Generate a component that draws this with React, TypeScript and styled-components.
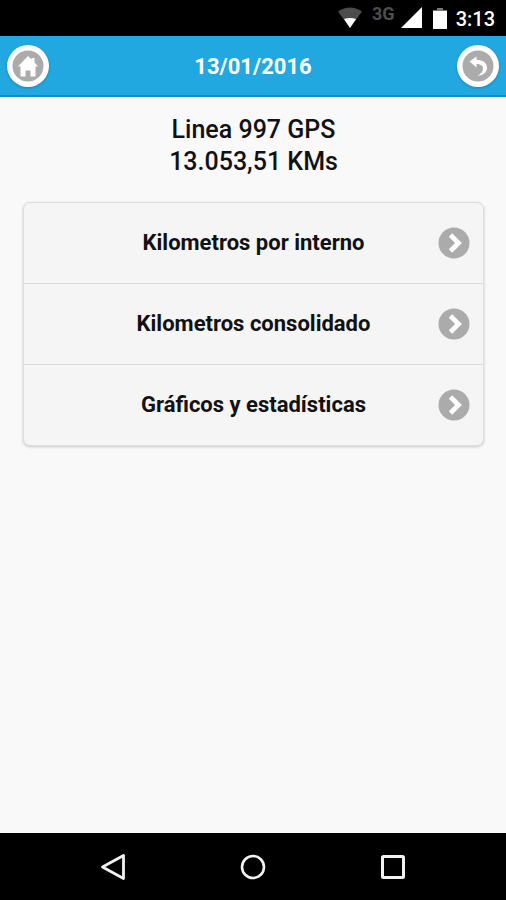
import React from "react";
import styled, { createGlobalStyle } from "styled-components";

const GlobalStyle = createGlobalStyle`
  *, *::before, *::after { box-sizing: border-box; }
  body {
    margin: 0;
    background: #f9f9f9;
    color: #111;
    font-family: Roboto, "Liberation Sans", sans-serif;
  }
`;

const Screen = styled.div`
  display: flex;
  flex-direction: column;
  min-height: 100vh;
`;

const StatusBar = styled.div`
  display: flex;
  align-items: center;
  justify-content: flex-end;
  height: 36px;
  padding: 0 11px;
  background: #000;
  color: #fff;
`;

const Network = styled.span`
  align-self: flex-start;
  margin: 4px 6px 0 10px;
  color: #4d4d4d;
  font-size: 18px;
  font-weight: 700;
  line-height: 20px;
`;

const Clock = styled.time`
  margin-left: 9px;
  padding-top: 2px;
  font-size: 20px;
  font-weight: 500;
  line-height: 24px;
`;

const BatteryIcon = styled.svg`
  margin-left: 11px;
`;

const Header = styled.header`
  display: flex;
  align-items: center;
  justify-content: space-between;
  height: 61px;
  padding: 0 7px;
  background: #22a8e0;
  border-bottom: 2px solid #0d8fcd;
`;

const Title = styled.h1`
  margin: 0;
  padding-top: 2px;
  color: #fff;
  font-size: 22px;
  font-weight: 700;
  line-height: 28px;
`;

const RoundButton = styled.button`
  display: flex;
  flex: none;
  width: 42px;
  height: 42px;
  padding: 5px;
  border: 0;
  border-radius: 50%;
  background: #fff;
  box-shadow: 0 1px 3px rgba(0, 0, 0, 0.2);
  cursor: pointer;
`;

const Main = styled.main`
  flex: 1;
  padding: 17px 22px 24px 23px;
`;

const Summary = styled.h2`
  margin: 0 0 24px;
  font-size: 25px;
  font-weight: 500;
  line-height: 32px;
  text-align: center;
`;

const Line = styled.span`
  display: block;
`;

const Menu = styled.ul`
  margin: 0;
  padding: 0;
  overflow: hidden;
  list-style: none;
  background: #f5f5f5;
  border: 1px solid #dedede;
  border-radius: 7px;
  box-shadow: 0 1px 3px rgba(0, 0, 0, 0.2);
`;

const MenuItem = styled.li`
  & + & {
    border-top: 1px solid #dadada;
  }
`;

const MenuLink = styled.a`
  display: grid;
  grid-template-columns: 32px 1fr 32px;
  align-items: center;
  min-height: 80px;
  padding: 0 13px;
  color: #111;
  font-size: 22px;
  font-weight: 700;
  line-height: 28px;
  text-align: center;
  text-decoration: none;
`;

const MenuLabel = styled.span`
  grid-column: 2;
`;

const NavBar = styled.nav`
  display: grid;
  grid-template-columns: repeat(3, 1fr);
  height: 67px;
  padding: 0 43px;
  background: #000;
`;

const NavButton = styled.button`
  display: flex;
  align-items: center;
  justify-content: center;
  padding: 0;
  border: 0;
  background: none;
  color: #f2f2f2;
  cursor: pointer;
`;

const Chevron = () => (
  <svg width="32" height="32" viewBox="0 0 32 32" aria-hidden="true">
    <circle cx="16" cy="16" r="15.5" fill="#ababab" />
    <path d="M12.5 8 20.5 16 12.5 24" fill="none" stroke="#fff" strokeWidth="4.8" />
  </svg>
);

const entries = ["Kilometros por interno", "Kilometros consolidado", "Gráficos y estadísticas"];

export default function App() {
  return (
    <Screen>
      <GlobalStyle />
      <StatusBar>
        <svg width="24" height="22" viewBox="0 0 24 22" aria-label="Wi-Fi">
          <path d="M0 4.5Q12-3.500 24 4.500L12 21Z" fill="#4d4d4d" />
          <path d="M6 12Q12 10 18 12L12 21Z" fill="#fff" />
        </svg>
        <Network>3G</Network>
        <svg width="21" height="22" viewBox="0 0 21 22" aria-label="Señal">
          <path d="M21 0V21H0Z" fill="#fff" />
        </svg>
        <BatteryIcon width="14" height="21" viewBox="0 0 14 21" aria-label="Batería">
          <path d="M4 0H10V2H14V4H0V2H4Z" fill="#777" />
          <path d="M0 3H14V21H0Z" fill="#fff" />
        </BatteryIcon>
        <Clock>3:13</Clock>
      </StatusBar>

      <Header>
        <RoundButton type="button" aria-label="Inicio">
          <svg width="32" height="32" viewBox="0 0 32 32" aria-hidden="true">
            <circle cx="16" cy="16" r="15.5" fill="#ababab" />
            <path
              d="M16 6 19.5 9.5V8H22.5V12.5L26 16.5H23.5V26.5H18.5V20.500H13.500V26.500H8.500V16.500H6Z"
              fill="#fff"
            />
          </svg>
        </RoundButton>
        <Title>13/01/2016</Title>
        <RoundButton type="button" aria-label="Volver">
          <svg width="32" height="32" viewBox="0 0 32 32" aria-hidden="true">
            <circle cx="16" cy="16" r="15.5" fill="#ababab" />
            <path
              d="M7.5 11.5 14.5 6.500V9.800C21 10 25 13 25 18C25 22.500 21 25.500 15.500 25.800C19 24 21 21.500 21 18.500C21 15.500 18.500 14 14.500 14V17.500Z"
              fill="#fff"
            />
          </svg>
        </RoundButton>
      </Header>

      <Main>
        <Summary>
          <Line>Linea 997 GPS</Line>
          <Line>13.053,51 KMs</Line>
        </Summary>
        <Menu>
          {entries.map((label) => (
            <MenuItem key={label}>
              <MenuLink href="#">
                <MenuLabel>{label}</MenuLabel>
                <Chevron />
              </MenuLink>
            </MenuItem>
          ))}
        </Menu>
      </Main>

      <NavBar>
        <NavButton type="button" aria-label="Atrás">
          <svg width="26" height="28" viewBox="0 0 26 28" aria-hidden="true">
            <path d="M23.5 2.5V25.5L2.5 14Z" fill="none" stroke="currentColor" strokeWidth="2.8" strokeLinejoin="round" />
          </svg>
        </NavButton>
        <NavButton type="button" aria-label="Pantalla principal">
          <svg width="26" height="26" viewBox="0 0 26 26" aria-hidden="true">
            <circle cx="13" cy="13" r="11" fill="none" stroke="currentColor" strokeWidth="2.6" />
          </svg>
        </NavButton>
        <NavButton type="button" aria-label="Recientes">
          <svg width="26" height="26" viewBox="0 0 26 26" aria-hidden="true">
            <rect x="2.5" y="2.5" width="21" height="21" rx="1" fill="none" stroke="currentColor" strokeWidth="3" />
          </svg>
        </NavButton>
      </NavBar>
    </Screen>
  );
}
